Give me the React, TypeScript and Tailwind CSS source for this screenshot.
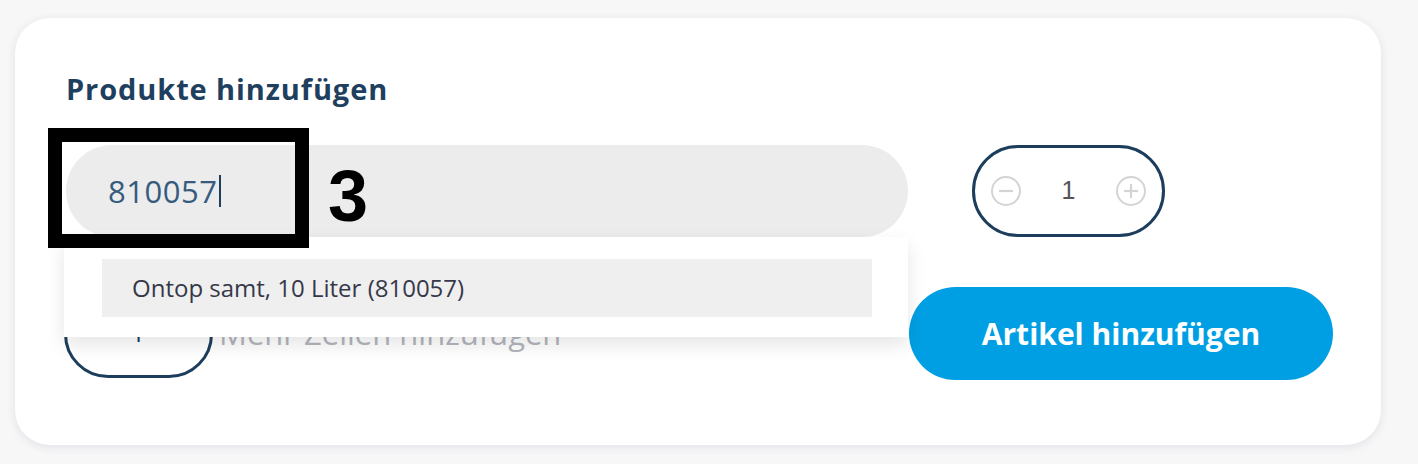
import React from "react";

function CircleIcon({ plus }: { plus?: boolean }) {
  return (
    <svg width="32" height="32" viewBox="0 0 32 32" fill="none">
      <circle cx="16" cy="16" r="14" stroke="#d4d4d6" strokeWidth="2" />
      <line x1="9" y1="16" x2="23" y2="16" stroke="#d4d4d6" strokeWidth="2.2" />
      {plus && (
        <line x1="16" y1="9" x2="16" y2="23" stroke="#d4d4d6" strokeWidth="2.2" />
      )}
    </svg>
  );
}

export default function App() {
  return (
    <div
      className="h-[464px] w-full bg-[#f7f7f8] pt-[18px] pl-[15px] overflow-hidden"
      style={{ fontFamily: '"Open Sans", sans-serif' }}
    >
      <div className="relative w-[1366px] h-[427px] bg-white rounded-[35px] shadow-[0_2px_10px_rgba(30,40,70,0.10)] pl-[51px] pr-[48px] pt-[51px]">
        {/* Title */}
        <h2 className="text-[29px] leading-[40px] font-bold tracking-[0.9px] text-[#1f3f5f]">
          Produkte hinzufügen
        </h2>

        {/* Search row */}
        <div className="flex items-start mt-[36px]">
          <div className="relative w-[842px]">
            <div className="h-[92px] rounded-full bg-[#ececec] flex items-center pl-[42px]">
              <span className="text-[31px] tracking-[0.5px] text-[#365b7f]">810057</span>
              <span className="ml-[2px] h-[32px] w-[2px] bg-[#1f3f5f]" />
            </div>

            {/* Suggestions dropdown */}
            <div className="absolute left-[-2px] right-0 top-[92px] z-20 bg-white shadow-[0_8px_18px_rgba(0,0,0,0.10)] pl-[38px] pr-[36px] pt-[22px] pb-[20px]">
              <div className="h-[58px] bg-[#efefef] flex items-center pl-[30px]">
                <span className="text-[24px] text-[#36384a]">
                  Ontop samt, 10 Liter (810057)
                </span>
              </div>
            </div>

            {/* Annotation */}
            <div className="absolute left-[-18px] top-[-17px] w-[261px] h-[120px] border-[14px] border-black z-30" />
            <div
              className="absolute left-[262px] top-[15px] z-30 text-[72px] leading-[72px] font-bold text-black"
              style={{ fontFamily: '"Liberation Sans", Arial, sans-serif' }}
            >
              3
            </div>
          </div>

          {/* Quantity stepper */}
          <div className="ml-[64px] w-[193px] h-[92px] rounded-full border-[3px] border-[#1c3d5c] flex items-center justify-between px-[15px]">
            <CircleIcon />
            <span
              className="text-[25px] text-[#555]"
              style={{ fontFamily: '"Liberation Sans", Arial, sans-serif' }}
            >
              1
            </span>
            <CircleIcon plus />
          </div>
        </div>

        {/* Actions row */}
        <div className="flex items-center justify-between mt-[50px] w-[1267px]">
          <div className="flex items-center">
            <button className="ml-[-2px] w-[149px] h-[88px] rounded-[44px] border-[3px] border-[#1c3d5c] flex items-center justify-center text-[#1c3d5c] text-[30px]">
              +
            </button>
            <span className="ml-[6px] text-[31px] text-[#b3b5bd]">
              Mehr Zeilen hinzufügen
            </span>
          </div>
          <button className="w-[424px] h-[93px] rounded-full bg-[#009fe3] text-white text-[30px] font-bold">
            Artikel hinzufügen
          </button>
        </div>
      </div>
    </div>
  );
}
